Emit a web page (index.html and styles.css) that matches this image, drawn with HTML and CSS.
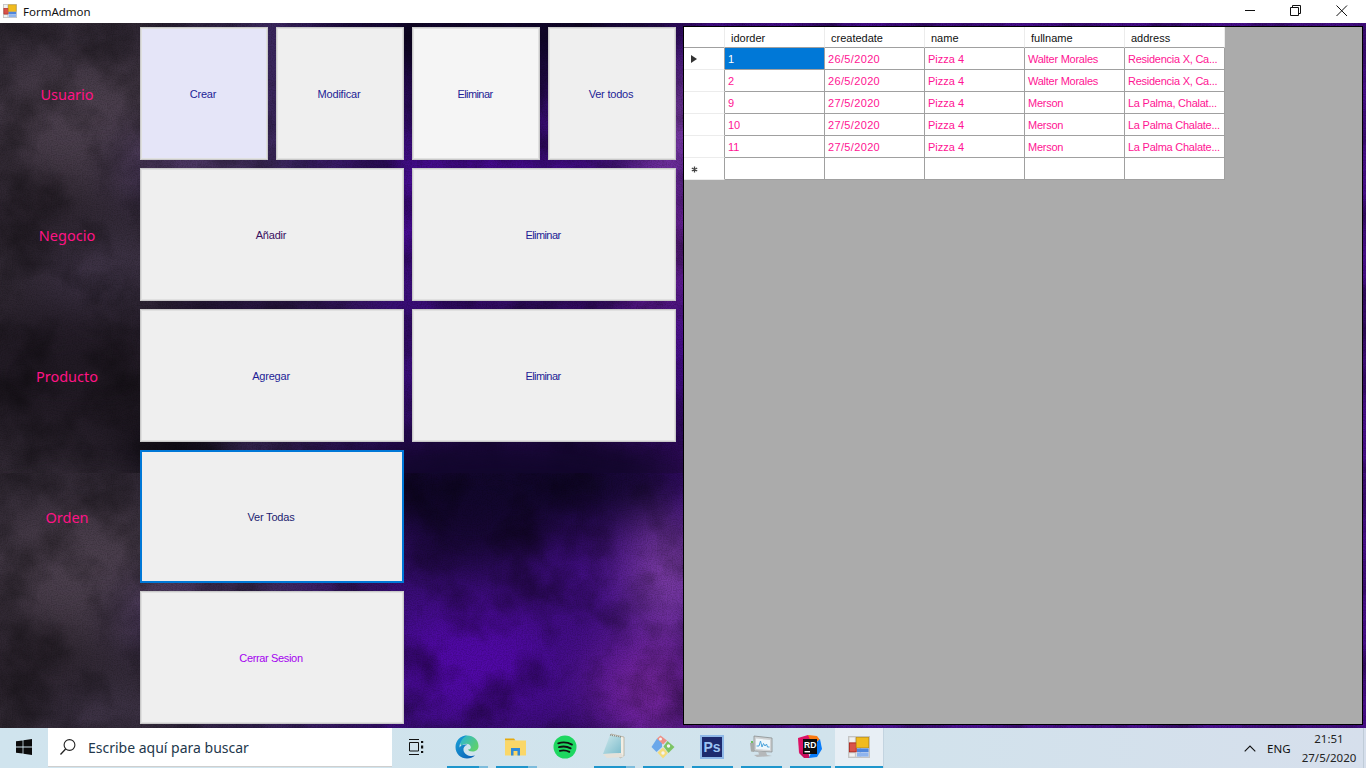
FILE: index.html
```html
<!DOCTYPE html>
<html lang="es">
<head>
<meta charset="utf-8">
<title>FormAdmon</title>
<link rel="stylesheet" href="styles.css">
</head>
<body>
<svg class="defs" width="0" height="0" aria-hidden="true">
  <defs>
    <symbol id="formicon" viewBox="0 0 16 16">
      <rect x="0.5" y="0.5" width="15" height="15" fill="#f1f1f1" stroke="#c4c4c4"/>
      <path d="M0.5 5.5H5.5M5.5 0.5V5.5M0.5 12H5.5M5.5 12V15.5M9 8.5V15.5" stroke="#c8c8c8" fill="none"/>
      <rect x="1" y="5" width="5" height="6.5" fill="#d9534a" stroke="#a81c14" stroke-width="0.6"/>
      <rect x="6" y="1" width="9" height="7.5" fill="#f0bb1e" stroke="#c59410" stroke-width="0.6"/>
      <rect x="6.5" y="9" width="8.5" height="2.8" fill="#4f86dc"/>
      <rect x="6.5" y="12" width="8.5" height="3" fill="#8fb4ee"/>
    </symbol>
    <linearGradient id="edgeA" x1="0" y1="0" x2="1" y2="1"><stop offset="0" stop-color="#1aa2d8"/><stop offset="1" stop-color="#0a5cb4"/></linearGradient>
    <linearGradient id="edgeB" x1="0" y1="0" x2="1" y2="0.6"><stop offset="0" stop-color="#2ab4d8"/><stop offset="1" stop-color="#5fd06c"/></linearGradient>
    <linearGradient id="padG" x1="0" y1="0" x2="1" y2="1"><stop offset="0" stop-color="#cfe9ec"/><stop offset="1" stop-color="#7dbccc"/></linearGradient>
    <filter id="blur" filterUnits="userSpaceOnUse" x="-100" y="-100" width="1566" height="650" color-interpolation-filters="sRGB"><feGaussianBlur stdDeviation="26"/></filter>
    <filter id="clouds" x="0" y="0" width="100%" height="100%" color-interpolation-filters="sRGB">
      <feTurbulence type="fractalNoise" baseFrequency="0.02" numOctaves="4" seed="7"/>
      <feColorMatrix values="0 0 0 0 0  0 0 0 0 0  0 0 0 0 0  0.9 0 0 0 -0.36"/>
    </filter>
    <filter id="grain" x="0" y="0" width="100%" height="100%" color-interpolation-filters="sRGB">
      <feTurbulence type="fractalNoise" baseFrequency="0.8" numOctaves="1" seed="3"/>
      <feColorMatrix values="0 0 0 0 0  0 0 0 0 0  0 0 0 0 0  0 0.45 0 0 -0.16"/>
    </filter>
    <linearGradient id="base" x1="0" y1="0" x2="1" y2="0">
      <stop offset="0" stop-color="#332b36"/>
      <stop offset="0.1" stop-color="#2e2632"/>
      <stop offset="0.2" stop-color="#3c2860"/>
      <stop offset="0.29" stop-color="#3a0e78"/>
      <stop offset="0.5" stop-color="#430c88"/>
      <stop offset="1" stop-color="#480e8c"/>
    </linearGradient>
    <g id="tile">
      <rect width="1366" height="450" fill="url(#base)"/>
      <g filter="url(#blur)">
        <ellipse cx="80" cy="95" rx="90" ry="65" fill="#4c404e"/>
        <ellipse cx="30" cy="190" rx="70" ry="40" fill="#2a222c"/>
        <ellipse cx="110" cy="250" rx="70" ry="28" fill="#463a50"/>
        <ellipse cx="190" cy="140" rx="70" ry="30" fill="#543c6e"/>
        <ellipse cx="70" cy="350" rx="120" ry="70" fill="#211a24"/>
        <ellipse cx="180" cy="430" rx="60" ry="26" fill="#040208"/>
        <ellipse cx="500" cy="10" rx="190" ry="50" fill="#10062a"/>
        <ellipse cx="470" cy="60" rx="70" ry="40" fill="#140630"/>
        <ellipse cx="470" cy="190" rx="80" ry="55" fill="#5208aa"/>
        <ellipse cx="670" cy="100" rx="45" ry="60" fill="#7c3ea4"/>
        <ellipse cx="660" cy="215" rx="65" ry="50" fill="#7a28a4"/>
        <ellipse cx="530" cy="290" rx="60" ry="14" fill="#160828"/>
        <ellipse cx="650" cy="285" rx="40" ry="14" fill="#6c2494"/>
        <ellipse cx="560" cy="450" rx="190" ry="42" fill="#2a0a4c"/>
        <ellipse cx="270" cy="300" rx="100" ry="28" fill="#200c38"/>
        <ellipse cx="1000" cy="220" rx="300" ry="180" fill="#4a1090"/>
      </g>
      <rect width="1366" height="450" filter="url(#clouds)"/>
      <rect width="1366" height="450" filter="url(#grain)"/>
    </g>
  </defs>
</svg>

<header class="titlebar">
  <svg class="titleicon"><use href="#formicon"/></svg>
  <span class="titletext">FormAdmon</span>
  <div class="winctrls">
    <span class="winctrl"><svg width="12" height="12" viewBox="0 0 12 12"><path d="M1 5.5H11" stroke="#111" fill="none"/></svg></span>
    <span class="winctrl"><svg width="12" height="12" viewBox="0 0 12 12"><path d="M0.5 2.5H8.5V10.5H0.5ZM2.5 2.5V0.5H10.5V8.5H8.5" stroke="#111" fill="none"/></svg></span>
    <span class="winctrl"><svg width="12" height="12" viewBox="0 0 12 12"><path d="M0.5 0.5L11 11M11 0.5L0.5 11" stroke="#111" fill="none"/></svg></span>
  </div>
</header>

<main class="form">
  <svg class="wallpaper" width="1366" height="705" aria-hidden="true">
    <use href="#tile"/>
    <use href="#tile" y="450"/>
  </svg>
  <div class="content">
    <section class="menu">
      <span class="label">Usuario</span>
      <button class="btn half hover">Crear</button>
      <button class="btn half">Modificar</button>
      <button class="btn half light elim">Eliminar</button>
      <button class="btn half">Ver todos</button>

      <span class="label">Negocio</span>
      <button class="btn wide dark">Añadir</button>
      <button class="btn wide elim">Eliminar</button>

      <span class="label">Producto</span>
      <button class="btn wide">Agregar</button>
      <button class="btn wide elim">Eliminar</button>

      <span class="label">Orden</span>
      <button class="btn wide focus">Ver Todas</button>
      <span class="blank"></span>

      <span class="blank-label"></span>
      <button class="btn wide logout">Cerrar Sesion</button>
    </section>

    <section class="gridview">
      <table class="dgv">
        <thead>
          <tr><th class="rowhead"></th><th>idorder</th><th>createdate</th><th>name</th><th>fullname</th><th>address</th></tr>
        </thead>
        <tbody>
          <tr><td class="rowhead"><span class="arrow"></span></td><td class="selected">1</td><td class="date">26/5/2020</td><td>Pizza 4</td><td class="tight">Walter Morales</td><td class="tight">Residencia X, Ca...</td></tr>
          <tr><td class="rowhead"></td><td>2</td><td class="date">26/5/2020</td><td>Pizza 4</td><td class="tight">Walter Morales</td><td class="tight">Residencia X, Ca...</td></tr>
          <tr><td class="rowhead"></td><td>9</td><td class="date">27/5/2020</td><td>Pizza 4</td><td class="tight">Merson</td><td class="tight">La Palma, Chalat...</td></tr>
          <tr><td class="rowhead"></td><td>10</td><td class="date">27/5/2020</td><td>Pizza 4</td><td class="tight">Merson</td><td class="tight">La Palma Chalate...</td></tr>
          <tr><td class="rowhead"></td><td>11</td><td class="date">27/5/2020</td><td>Pizza 4</td><td class="tight">Merson</td><td class="tight">La Palma Chalate...</td></tr>
          <tr><td class="rowhead"><svg class="star" width="7" height="7" viewBox="0 0 7 7"><path d="M3.5 0.5V6.5M0.8 2L6.2 5M6.2 2L0.8 5" stroke="#444" stroke-width="1.3" fill="none"/></svg></td><td></td><td></td><td></td><td></td><td></td></tr>
        </tbody>
      </table>
    </section>
  </div>
</main>

<footer class="taskbar">
  <div class="start">
    <svg width="16" height="16" viewBox="0 0 16 16"><path d="M0 2.3L6.6 1.4V7.5H0ZM7.4 1.3L16 0V7.5H7.4ZM0 8.4H6.6V14.6L0 13.7ZM7.4 8.4H16V16L7.4 14.7Z" fill="#0b0b0b"/></svg>
  </div>
  <div class="search">
    <svg width="18" height="18" viewBox="0 0 18 18"><circle cx="10.5" cy="7" r="5.4" fill="none" stroke="#222" stroke-width="1.1"/><path d="M6.6 11L1.5 16.5" stroke="#222" stroke-width="1.3" fill="none"/></svg>
    <span class="searchtext">Escribe aquí para buscar</span>
  </div>
  <div class="taskview">
    <svg width="16" height="16" viewBox="0 0 16 16"><path d="M1 0.5H11M1 15.5H11M1.5 3.5H10.5V12H1.5Z" stroke="#111" fill="none"/><rect x="13" y="2" width="2.2" height="2" fill="#111"/><rect x="13" y="6.5" width="2.2" height="3" fill="#111"/><rect x="13" y="12" width="2.2" height="2" fill="#111"/></svg>
  </div>
  <div class="apps">
    <div class="app multi">
      <svg width="24" height="24" viewBox="0 0 24 24">
        <path d="M12 0.5C18.5 0.5 23.5 5 23.5 11C23.5 15 20.5 16.5 17.5 16.5C14.5 16.5 13.5 15.5 13 14.5C15.5 14.5 16.5 13 15.5 11C14 8 9 8 6.5 11C3 7 6 0.5 12 0.5Z" fill="url(#edgeB)"/>
        <path d="M12 0.5C5 0.5 0.5 6 0.5 12C0.5 19 6 23.5 12 23.5C15 23.5 18 22.5 20 20.5C15 22 9.5 20 8.5 15.5C8 13 9.5 10.5 12.5 9.8C9.5 8.8 6 10 4.5 12.5C4.5 7 8 2 12 0.5Z" fill="url(#edgeA)"/>
      </svg>
    </div>
    <div class="app multi">
      <svg width="22" height="20" viewBox="0 0 22 20">
        <path d="M0 1.5H9L10.5 3.5H0Z" fill="#e6a90c"/>
        <rect x="0" y="3.5" width="21" height="15" fill="#fad768"/>
        <path d="M6 18.5V11H15V18.5H12.5V14H8.5V18.5Z" fill="#2f8bd8"/>
      </svg>
    </div>
    <div class="app">
      <svg width="24" height="24" viewBox="0 0 24 24">
        <circle cx="12" cy="12" r="11.5" fill="#1ed760"/>
        <path d="M5.2 8.3C9.5 7 15 7.4 19 9.6M6 12.2C9.8 11.1 14.3 11.5 17.7 13.4M6.8 15.8C10 15 13.6 15.3 16.4 16.9" stroke="#111" stroke-width="1.8" stroke-linecap="round" fill="none"/>
      </svg>
    </div>
    <div class="app multi">
      <svg width="24" height="28" viewBox="0 0 24 28">
        <path d="M9 1L22 4V23L18 25Z" fill="#f2eee4" stroke="#a9a494" stroke-width="0.7"/>
        <path d="M8 2L19 4L19 20L1 21Z" fill="url(#padG)"/>
        <path d="M1 21L19 20L22 24L5 25Z" fill="#e4e1d9"/>
        <path d="M8 2L19 4" stroke="#8a8a80" stroke-width="1.4" stroke-dasharray="1 1"/>
      </svg>
    </div>
    <div class="app bar">
      <svg width="24" height="24" viewBox="0 0 24 24">
        <path d="M11 8L6 3.5L0.5 12L5.5 17L11 12Z" fill="#6ba8ea"/>
        <path d="M6 3.5L9.5 0.5L16 5.5L12 9.5Z" fill="#ee8f86"/>
        <path d="M12.5 11.5L16.5 6L23.5 12L17.5 18Z" fill="#7cc464"/>
        <path d="M6.5 17.5L12 12.5L17 18L12 23.5Z" fill="#f4dc7c"/>
        <circle cx="9.5" cy="4" r="1.5" fill="#f3f3f3"/>
        <circle cx="17.5" cy="11" r="1.7" fill="#f3f3f3"/>
        <circle cx="12" cy="18" r="1.7" fill="#f3f3f3"/>
      </svg>
    </div>
    <div class="app bar">
      <span class="ps"><span class="pstext">Ps</span></span>
    </div>
    <div class="app bar">
      <svg width="25" height="24" viewBox="0 0 25 24">
        <path d="M5 1L23 3V17L5 16Z" fill="#cfd2d4" stroke="#8c8f90" stroke-width="0.8"/>
        <path d="M7 3.5L21 5V15L7 14Z" fill="#eef7fb"/>
        <path d="M7.5 11H10L11.5 6L13 12L14.5 8.5L16 11L17.5 9L18.5 12H20.5" stroke="#4aa3dc" fill="none"/>
        <path d="M1 8L5 7.5V17L2 16.5Z" fill="#a6aaa8"/>
        <path d="M2 6L4 6V8L2 8Z" fill="#6fbf5c"/>
        <path d="M9 16L17 17L18 20L23 21L8 22L5 20L10 19.5Z" fill="#b5b8ba"/>
      </svg>
    </div>
    <div class="app bar">
      <span class="rider">
        <svg width="24" height="24" viewBox="0 0 24 24">
          <path d="M0 3L10 0L14 3L8 15L1 18Z" fill="#dd1265"/>
          <path d="M10 0L19 1L22 5L14 9Z" fill="#f97a12"/>
          <path d="M1 18L8 12L12 23L6 23Z" fill="#c90f5e"/>
          <path d="M22 4L24 14L19 22L11 23L16 10Z" fill="#087cfa"/>
          <rect x="5" y="4" width="14" height="15" fill="#0d0d0d"/>
          <rect x="6.5" y="16" width="5.5" height="1.4" fill="#fff"/>
        </svg>
        <span class="ridertext">RD</span>
      </span>
    </div>
    <div class="app active">
      <svg width="22" height="22"><use href="#formicon"/></svg>
    </div>
  </div>
  <div class="tray">
    <svg class="chev" width="12" height="7" viewBox="0 0 12 7"><path d="M0.7 6.3L6 1L11.3 6.3" stroke="#111" stroke-width="1.1" fill="none"/></svg>
    <span class="lang">ENG</span>
    <div class="clock"><span>21:51</span><span>27/5/2020</span></div>
    <span class="showdesk"></span>
  </div>
</footer>
</body>
</html>
```
FILE: styles.css
```css
* { box-sizing: border-box; }
html, body { margin: 0; padding: 0; }
body {
  width: 1366px;
  height: 768px;
  overflow: hidden;
  display: flex;
  flex-direction: column;
  font-family: "Liberation Sans", Arial, sans-serif;
  background: #fff;
}
.defs { display: block; height: 0; width: 0; }

/* title bar */
.titlebar {
  height: 23px;
  flex: none;
  display: flex;
  align-items: flex-start;
  background: #fff;
}
.titleicon { width: 14px; height: 14px; margin: 4px 6px 0 3px; flex: none; }
.titletext {
  font: 11.5px/24px "Noto Sans", sans-serif;
  color: #111;
}
.winctrls { margin-left: auto; display: flex; padding-right: 1px; }
.winctrl {
  width: 46px;
  height: 22px;
  display: flex;
  align-items: center;
  justify-content: center;
}

/* form */
.form {
  height: 705px;
  flex: none;
  display: grid;
  overflow: hidden;
  background: #2c0a50;
}
.wallpaper { grid-area: 1 / 1; display: block; }
.content {
  grid-area: 1 / 1;
  display: flex;
  min-width: 0;
  height: 705px;
}

.menu {
  width: 683px;
  flex: none;
  padding: 4px 0 0 0;
  display: grid;
  grid-template-columns: 132px repeat(4, 128px);
  grid-template-rows: repeat(5, 133px);
  gap: 8px;
}
.label {
  font: 14.5px/1 "Noto Sans", sans-serif;
  color: #ff1385;
  display: flex;
  align-items: center;
  justify-content: center;
  padding: 2px 0 0 2px;
}
.blank { grid-column: span 2; }
.btn {
  appearance: none;
  margin: 0;
  padding: 1px 2px 0 0;
  font: 11px "Liberation Sans", Arial, sans-serif;
  letter-spacing: -0.2px;
  color: #1d1d96;
  background: #efefef;
  border: 1px solid #c9c9c9;
  box-shadow: inset 0 0 0 1px #e0e0e0;
  border-radius: 0;
}
.half { grid-column: span 1; }
.wide { grid-column: span 2; }
.hover { background: #e5e5f8; }
.light { background: #f5f5f5; }
.dark { color: #3a1060; }
.elim { letter-spacing: -0.6px; }
.focus {
  border: 2px solid #0078d7;
  box-shadow: none;
  color: #1c1c70;
}
.logout { color: #a400f0; letter-spacing: -0.35px; }

/* data grid */
.gridview {
  width: 680px;
  height: 699px;
  margin-top: 3px;
  flex: none;
  background: #ababab;
  border: 1px solid #000;
}
.dgv {
  border-collapse: separate;
  border-spacing: 0;
  table-layout: fixed;
  width: 541px;
  font: 11px "Liberation Sans", Arial, sans-serif;
}
.dgv th, .dgv td {
  width: 100px;
  height: 22px;
  padding: 0 0 0 3px;
  background: #fff;
  text-align: left;
  font-weight: normal;
  white-space: nowrap;
  overflow: hidden;
  color: #ff1493;
  border-right: 1px solid #a0a0a0;
  border-bottom: 1px solid #a0a0a0;
}
.dgv th {
  height: 21px;
  padding: 2px 0 0 6px;
  color: #111;
  border-right: 1px solid #ececec;
}
.dgv .rowhead {
  width: 41px;
  padding: 0 0 0 7px;
  border-right: 1px solid #a0a0a0;
  border-bottom: 1px solid #ececec;
}
.dgv th.rowhead { border-right-color: #ececec; border-bottom-color: #a0a0a0; }
.dgv td.selected { background: #0078d7; color: #fff; }
.dgv td.date { letter-spacing: 0.35px; }
.dgv td.tight { letter-spacing: -0.25px; }
.arrow {
  display: block;
  width: 0;
  height: 0;
  border-left: 6px solid #333;
  border-top: 4.5px solid transparent;
  border-bottom: 4.5px solid transparent;
}
.star { display: block; margin: 1px 0 0; }

/* taskbar */
.taskbar {
  height: 40px;
  flex: none;
  display: flex;
  align-items: stretch;
  background: linear-gradient(90deg, #d0e4ee 0%, #d1e3ec 60%, #d6dfec 100%);
}
.start {
  width: 48px;
  display: flex;
  align-items: center;
  justify-content: center;
  padding: 0 1px 2px 0;
}
.search {
  width: 344px;
  height: 39px;
  display: flex;
  align-items: center;
  gap: 11px;
  padding-left: 11px;
  background: #fff;
  border-bottom: 1px solid #cfcfcf;
}
.searchtext {
  font: 14px "Noto Sans", sans-serif;
  color: #23384c;
}
.taskview {
  width: 51px;
  display: flex;
  align-items: center;
  justify-content: center;
  padding: 0 3px 2px 0;
}
.apps { display: flex; }
.app {
  width: 49px;
  display: flex;
  align-items: center;
  justify-content: center;
  padding: 0 1px 3px 0;
}
.bar { background: linear-gradient(#1e96cc, #1e96cc) 4px 100% / 41px 2px no-repeat; }
.multi { background:
  linear-gradient(#1e96cc, #1e96cc) 4px 100% / 32px 2px no-repeat,
  linear-gradient(#7cbcdc, #7cbcdc) 36px 100% / 9px 2px no-repeat; }
.active {
  border-right: 1px solid #c3d4e0;
  background:
    linear-gradient(#1e96cc, #1e96cc) 0 100% / 100% 2px no-repeat,
    #e8eff5;
}
.ps {
  width: 24px;
  height: 24px;
  background: #1d2a6e;
  border: 2px solid #8fb8e8;
  display: flex;
  align-items: center;
  justify-content: center;
}
.pstext {
  font: bold 14px "Liberation Sans", sans-serif;
  color: #9cc4f4;
}
.rider {
  display: grid;
  width: 24px;
  height: 24px;
}
.rider svg { grid-area: 1 / 1; }
.ridertext {
  grid-area: 1 / 1;
  font: bold 8.5px/1 "Liberation Sans", sans-serif;
  color: #fff;
  padding: 6px 0 0 6px;
}
.tray {
  margin-left: auto;
  display: flex;
  align-items: center;
}
.chev { margin-right: 11px; }
.lang {
  font: 11.5px "Noto Sans", sans-serif;
  color: #111;
  margin-right: 11px;
  width: 24px;
}
.clock {
  display: flex;
  flex-direction: column;
  align-items: center;
  width: 54px;
  font: 11.5px/19px "Noto Sans", sans-serif;
  color: #222;
}
.showdesk {
  width: 1px;
  height: 40px;
  margin: 0 2px 0 7px;
  background: #c0ccd8;
}
```
